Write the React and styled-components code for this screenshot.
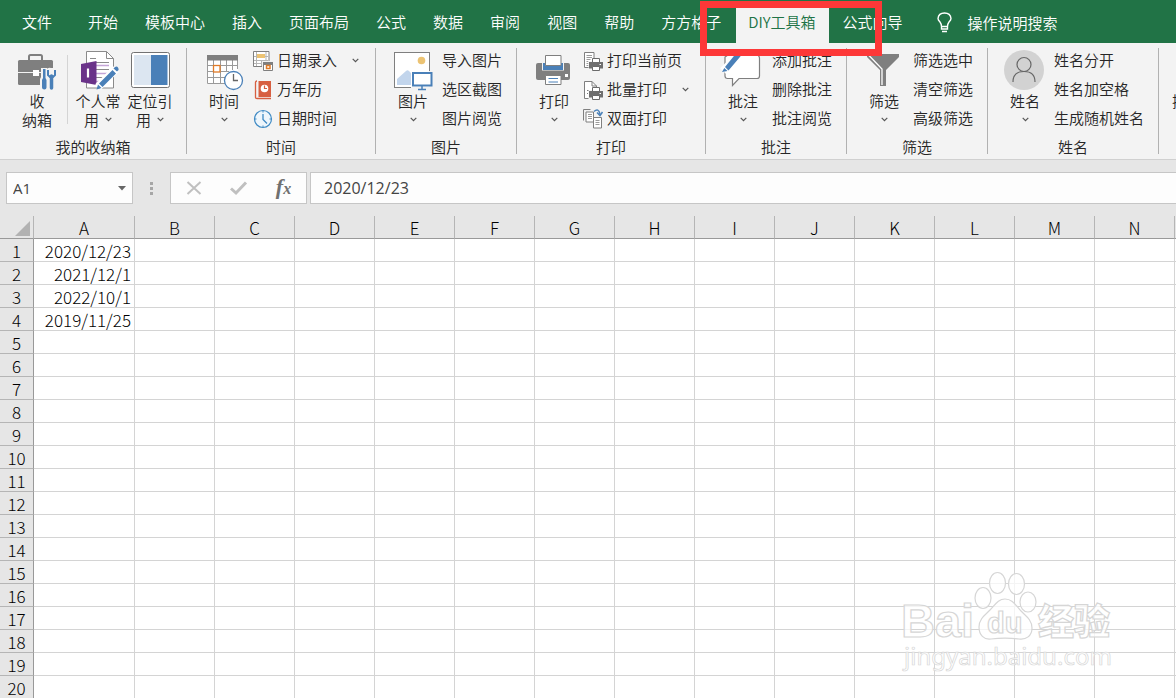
import React, { useState } from "react";
import styled, { createGlobalStyle } from "styled-components";

const colors = {
  green: "#217346",
  ribbon: "#f3f3f3",
  bar: "#e6e6e6",
  gray: "#7f7f7f",
  blue: "#4a80b8",
  text: "#262626",
};

const GlobalStyle = createGlobalStyle`
  * {
    box-sizing: border-box;
  }

  body {
    margin: 0;
    font-family: "Noto Sans CJK SC", "Liberation Sans", sans-serif;
    font-size: 15px;
    font-weight: 350;
    color: ${colors.text};
  }

  button, input {
    font: inherit;
    color: inherit;
    border: none;
    background: none;
    padding: 0;
    margin: 0;
  }

  svg {
    display: block;
    flex-shrink: 0;
    overflow: visible;
  }
`;

const AppContainer = styled.div`
  position: relative;
  height: 100vh;
  display: flex;
  flex-direction: column;
  overflow: hidden;
  background: #fff;
`;

const TabBar = styled.nav`
  flex-shrink: 0;
  display: flex;
  align-items: stretch;
  gap: 2px;
  height: 43px;
  padding: 8px 0 0 10px;
  background: ${colors.green};
`;

const Tab = styled.button`
  flex-shrink: 0;
  padding: 0 13px 8px 12px;
  margin-right: ${(props) => (props.$first ? "9px" : "0")};
  line-height: 22px;
  white-space: nowrap;
  color: ${(props) => (props.$active ? colors.green : "#fff")};
  background: ${(props) => (props.$active ? colors.ribbon : "transparent")};
`;

const TellMe = styled.button`
  display: flex;
  align-items: center;
  gap: 16px;
  padding: 0 12px 6px 19px;
  color: #fff;
  white-space: nowrap;
`;

const RibbonContainer = styled.div`
  flex-shrink: 0;
  display: flex;
  overflow: hidden;
  background: ${colors.ribbon};
  border-bottom: 1px solid #d0d0d0;
`;

const Group = styled.section`
  flex: 0 0 ${(props) => props.$width}px;
  display: flex;
  flex-direction: column;
  padding: 3px 0 2px;
`;

const GroupBody = styled.div`
  display: flex;
  height: 87px;
  padding-left: ${(props) => (props.$tight ? "2px" : "11px")};
`;

const GroupTitle = styled.div`
  min-height: 24px;
  padding-top: 4px;
  line-height: 19px;
  text-align: center;
`;

const Separator = styled.div`
  flex: 0 0 1px;
  margin: 5px 0;
  background: #b1b1b1;
`;

const InnerSeparator = styled.div`
  flex: 0 0 1px;
  margin: 9px 4px;
  background: #d4d4d4;
`;

const BigButton = styled.button`
  flex: 0 0 52px;
  display: flex;
  flex-direction: column;
  align-items: center;
  padding-top: 4px;
  line-height: 19px;
  white-space: nowrap;
`;

const BigLabel = styled.span`
  margin-top: 1px;
`;

const SecondLine = styled.span`
  display: flex;
  align-items: center;
  justify-content: center;
  gap: 6px;
  height: 19px;
`;

const CommandList = styled.div`
  display: flex;
  flex-direction: column;
  align-items: flex-start;
  margin-left: 3px;
`;

const Command = styled.button`
  display: flex;
  align-items: center;
  gap: 4px;
  height: 29px;
  white-space: nowrap;
`;

const CommandLabel = styled.span`
  padding-bottom: 2px;
`;

const CommandArrow = styled.span`
  margin-left: 11px;
`;

const FormulaBar = styled.div`
  flex-shrink: 0;
  display: flex;
  padding: 12px 0 12px 6px;
  background: ${colors.bar};
  color: #444;
  font-family: "Open Sans", "Noto Sans CJK SC", sans-serif;
  font-weight: 400;
`;

const BarBox = styled.div`
  display: flex;
  align-items: center;
  min-width: 0;
  height: 32px;
  border: 1px solid #c6c6c6;
  background: #fdfdfd;
`;

const NameBox = styled(BarBox)`
  flex: 0 0 127px;

  input {
    flex: 1;
    min-width: 0;
    padding-left: 6px;
    outline: none;
  }

  button {
    padding: 8px 6px;
  }
`;

const Dots = styled.div`
  flex: 0 0 37px;
  display: flex;
  flex-direction: column;
  align-items: center;
  justify-content: center;
  gap: 2px;
`;

const Dot = styled.span`
  width: 3px;
  height: 3px;
  background: #a6a6a6;
`;

const FormulaButtons = styled(BarBox)`
  flex: 0 0 137px;
  margin-right: 3px;
`;

const FormulaButton = styled.button`
  flex: 1;
  height: 100%;
  display: flex;
  align-items: center;
  justify-content: center;
`;

const FxLabel = styled.span`
  font-family: "Liberation Serif", serif;
  font-size: 22px;
  line-height: 24px;
  font-style: italic;
  font-weight: bold;
  color: #707070;

  small {
    font-size: 16px;
  }
`;

const FormulaInputBox = styled(BarBox)`
  flex: 1;
  border-right: none;

  input {
    width: 100%;
    padding-left: 13px;
    font-size: 16px;
    outline: none;
  }
`;

const SheetContainer = styled.main`
  position: relative;
  flex: 1;
  min-height: 0;
  overflow: hidden;
`;

const SheetTable = styled.table`
  table-layout: fixed;
  width: 1255px;
  border-spacing: 0;
  font-size: 17px;
  line-height: 21px;
  color: #000;

  th {
    padding: 1px 0 0;
    font-weight: 300;
    background: ${colors.bar};
  }
`;

const IndexCol = styled.col`
  width: 34px;
`;

const FirstCol = styled.col`
  width: 101px;
`;

const Col = styled.col`
  width: 80px;
`;

const ColumnHead = styled.th`
  height: 23px;
  border-bottom: 1px solid #999;
  border-right: 1px solid #b5b5b5;
`;

const Corner = styled(ColumnHead)`
  svg {
    margin: 3px 3px 2px auto;
  }
`;

const RowHead = styled.th`
  height: 23px;
  border-right: 1px solid #999;
  border-bottom: 1px solid #b5b5b5;
`;

const Cell = styled.td`
  height: 23px;
  padding: 1px 3px 0 0;
  text-align: right;
  font-weight: 300;
  border-right: 1px solid #d4d4d4;
  border-bottom: 1px solid #d4d4d4;
`;

const Watermark = styled.div`
  position: absolute;
  right: 60px;
  bottom: 20px;
`;

const Highlight = styled.div`
  position: absolute;
  top: 1px;
  left: 700px;
  width: 182px;
  height: 55px;
  border: 7px solid #fd3838;
  pointer-events: none;
`;

function Chevron() {
  return (
    <svg width="7" height="5" viewBox="0 0 7 5" fill="none" stroke="#555" strokeWidth="1.2">
      <path d="M.7 .8 3.5 3.6 6.3 .8" />
    </svg>
  );
}

function BigIcon({ children }) {
  return (
    <svg width="40" height="40" viewBox="0 0 40 40" fill="none">
      {children}
    </svg>
  );
}

function SmallIcon({ children }) {
  return (
    <svg width="20" height="20" viewBox="0 0 20 20" fill="none">
      {children}
    </svg>
  );
}

function ToolboxIcon() {
  return (
    <BigIcon>
      <path d="M12 10V6.500q0-1.500 1.500-1.500h10q1.500 0 1.500 1.500V10" stroke={colors.gray} strokeWidth="2" />
      <rect x="1" y="10" width="35" height="25" rx="1.500" fill={colors.gray} />
      <path d="M1 22.500h35" stroke="#f3f3f3" />
      <rect x="16" y="20" width="6" height="6" fill="#fff" />
      <path d="M24 18h6v9l1 2v11h-8V29l1-2zM29 20q2-3 5-2h3q4 3 2 9l-2 3v10h-6V30q-3-3-2-6z" fill="#f3f3f3" />
      <path d="M26 19h2.500v9l1 2v7.500q0 2-2.200 2t-2.300-2V30l1-2z" fill={colors.blue} />
      <path d="M31 20v5l2 2h3l2-2v-5" stroke={colors.blue} strokeWidth="2" />
      <path d="M34.500 26v12" stroke={colors.blue} strokeWidth="3.500" strokeLinecap="round" />
    </BigIcon>
  );
}

function NotebookIcon() {
  return (
    <BigIcon>
      <path d="M8.500 1.500h20l7 7v29.500h-27z" fill="#fff" stroke="#8a8a8a" />
      <path d="M28.500 1.500v7h7M12 8.500h6" stroke="#8a8a8a" />
      <path d="M18 12.500h13M18 19.500h13M18 27.500h8" stroke="#8a8a8a" />
      <path d="M18 15.500h13M18 23.500h13M18 31.500h6" stroke="#c4a5d6" strokeWidth="1.500" />
      <path d="M3 14 18.500 11v24L3 32z" fill="#6a3389" />
      <path d="M10 18.500v9" stroke="#fff" strokeWidth="2.200" />
      <path d="M38 19 20 37" stroke="#fff" strokeWidth="8" />
      <path d="M35.500 18.500l1.500-1.500q2-1 3 .5t.5 2.500L39 21.500zM34.500 20 38 23.500 24.500 37 21 33.500zM20 34.500 23.500 38 18.500 39.500z" fill={colors.blue} />
    </BigIcon>
  );
}

function PaneIcon() {
  return (
    <BigIcon>
      <rect x="1.500" y="2.500" width="38" height="35" rx="2" fill="#fff" stroke="#737373" />
      <path d="M4 5h17v30H4z" fill="#dce6f1" />
      <path d="M21 5h16.500v30H21z" fill={colors.blue} />
    </BigIcon>
  );
}

function CalendarIcon() {
  return (
    <BigIcon>
      <path d="M3 5h31v29H3z" fill="#fff" />
      <path d="M3.500 10v23.500H21M9.500 10v23M16.500 10v23M22.500 10v12M28.500 10v10M33.500 10v9M3 15.500h30M3 21.500h22M3 27.500h18" stroke="#9a9a9a" />
      <path d="M3 5h31v5.500H3z" fill={colors.gray} />
      <rect x="9.500" y="15.500" width="6.500" height="6.500" fill="#fff" stroke="#e07b28" strokeWidth="1.300" />
      <circle cx="29.500" cy="30.500" r="9" fill="#fff" stroke={colors.blue} strokeWidth="1.300" />
      <path d="M29.500 24v6.500H34" stroke="#666" strokeWidth="1.300" />
    </BigIcon>
  );
}

function PictureIcon() {
  return (
    <BigIcon>
      <rect x="1.500" y="2.500" width="35" height="35" fill="#fff" stroke={colors.gray} />
      <circle cx="28.500" cy="10.500" r="3.800" fill="#ecc373" />
      <path d="M4 35V29l9-8q1.500-1.500 3 0l5 5v9z" fill="#c2d5ec" />
      <path d="M18 21h22v19H18z" fill="#f3f3f3" />
      <path d="M18 21h18v16H18z" fill="#fff" />
      <path d="M18 37h22v3H18z" fill="#f3f3f3" />
      <rect x="20" y="23" width="18.500" height="12.500" fill="#fff" stroke={colors.blue} strokeWidth="2" />
      <path d="M29 36v3M25 39.500h8" stroke={colors.blue} strokeWidth="1.500" />
    </BigIcon>
  );
}

function PrinterIcon() {
  return (
    <BigIcon>
      <path d="M4 13h30q2 0 2 2v13q0 2-2 2H4q-2 0-2-2V15q0-2 2-2z" fill={colors.gray} />
      <path d="M8 12.500h22v8H8z" fill="#f3f3f3" />
      <path d="M9 13h20v7H9z" fill={colors.blue} />
      <path d="M11.500 5.500h15.500v10H11.500z" fill="#fff" stroke={colors.gray} />
      <path d="M31 24h3v3h-3z" fill="#fff" />
      <path d="M11.500 25.500h15.500v9H11.500z" fill="#fff" stroke={colors.gray} />
      <path d="M14.500 28.500h9.500M14.500 32h9.500" stroke={colors.blue} />
    </BigIcon>
  );
}

function CommentIcon() {
  return (
    <BigIcon>
      <path d="M5 5h28q3.500 0 3.500 3.500V26q0 2.500-2.500 2.500H16l-6.500 7v-7H4.500Q2 28.500 2 26V7z" fill="#fff" stroke={colors.gray} strokeWidth="1.200" />
      <path d="M0 21 19 2" stroke="#fff" strokeWidth="8" />
      <path d="M15 1h7L5.500 20.500 2 17zM1.300 18 4.500 21-1 22z" fill={colors.blue} />
    </BigIcon>
  );
}

function FunnelIcon() {
  return (
    <BigIcon>
      <path d="M3 4h32v3L22 20v16h-6V20L3 7z" fill={colors.gray} />
      <path d="M5 5.500 18 19v16" stroke="#fff" strokeWidth="1.300" />
    </BigIcon>
  );
}

function PersonIcon() {
  return (
    <BigIcon>
      <circle cx="19" cy="20" r="20" fill="#d2d2d2" />
      <g stroke="#666" strokeWidth="1.200">
        <circle cx="19" cy="14.500" r="7" />
        <path d="M8 32q0-10.500 11-10.500T30 32" />
      </g>
    </BigIcon>
  );
}

function DateEntryIcon() {
  return (
    <SmallIcon>
      <path d="M.5 .5h15.500v15H.5z" fill="#fff" stroke={colors.gray} />
      <path d="M3.500 1v14M13 1v8M1 9.500h14M1 12.500h9M8.500 9v6M1 5.500h14" stroke="#b5b5b5" />
      <path d="M4 3h8v4H4z" fill="#ecc373" />
      <path d="M9 10h12v11H9z" fill="#f3f3f3" />
      <path d="M10.500 11.500h9v8h-9z" fill="#fff" stroke={colors.gray} />
      <path d="M10 11h10v3H10z" fill={colors.gray} />
      <path d="M13.500 14.500h3.500v3h-3.500z" stroke="#e07b28" strokeWidth="1.500" />
    </SmallIcon>
  );
}

function AlmanacIcon() {
  return (
    <SmallIcon>
      <path d="M4 1Q2.500 1 2.500 2.500v15q0 1 1.500 1h14" stroke="#d75f41" strokeWidth="1.300" />
      <path d="M5.500 1H18v16H5.500z" fill="#d75f41" />
      <circle cx="11.500" cy="8.500" r="3.800" fill="#fff" />
      <path d="M11.500 5.500v3h2.500" stroke="#d75f41" strokeWidth="1.200" />
    </SmallIcon>
  );
}

function ClockIcon() {
  return (
    <SmallIcon>
      <circle cx="10" cy="10" r="8.500" fill="#eef6fc" stroke="#3f8ac4" strokeWidth="1.200" />
      <path d="M10 5v5.500l4 4" stroke="#3f8ac4" strokeWidth="1.300" />
      <path d="M10 2v1.500M10 16.500V18M2 10h1.500M16.500 10H18" stroke="#3f8ac4" />
    </SmallIcon>
  );
}

function MiniPrinter() {
  return (
    <g>
      <path d="M5.500 10h15v10h-15z" fill="#f3f3f3" />
      <path d="M9.500 7.500h7v4h-7z" fill="#fff" stroke="#6a6a6a" />
      <path d="M6 11h14v6.500H6z" fill="#6f6f6f" />
      <path d="M16.500 13h1.500v1h-1.500z" fill="#fff" />
      <path d="M9.500 15.500h7v4h-7z" fill="#fff" stroke="#6a6a6a" />
    </g>
  );
}

function PrintPageIcon() {
  return (
    <SmallIcon>
      <path d="M1.500 1.500h9.500v15H1.500z" fill="#fff" stroke={colors.gray} />
      <path d="M3.500 4.500h5.500M3.500 6.500h5.500M3.500 8.500h4M3.500 10.500h2M3.500 12.500h2M3.500 14.500h2" stroke="#9a9a9a" />
      <MiniPrinter />
    </SmallIcon>
  );
}

function BatchPrintIcon() {
  return (
    <SmallIcon>
      <path d="M1.500 1.500h7.500l4.500 4.500v12.500h-12z" fill="#fff" stroke={colors.gray} />
      <path d="M9 1.500v4.500h4.500M4 10.500h2M4 13.500h1" stroke={colors.gray} />
      <MiniPrinter />
    </SmallIcon>
  );
}

function DuplexIcon() {
  return (
    <SmallIcon>
      <path d="M.5 11.500V.5h7" stroke={colors.gray} />
      <path d="M3 3h7.500v10H3z" fill="#fff" stroke={colors.gray} />
      <path d="M5 5.500h4M5 7.500h4M5 9.500h4" stroke="#9a9a9a" />
      <path d="M10.500 8.500h8v10.500h-8z" fill="#fff" stroke={colors.gray} />
      <path d="M12.500 11.500h4M12.500 13.500h4M12.500 15.500h4" stroke="#9a9a9a" />
      <path d="M11 2.500q4.500-4 6 2.500" stroke={colors.blue} strokeWidth="1.500" />
      <path d="M14 3.500 17 6.500 19.500 3" stroke={colors.blue} strokeWidth="1.500" />
    </SmallIcon>
  );
}

const tabs = ["文件", "开始", "模板中心", "插入", "页面布局", "公式", "数据", "审阅", "视图", "帮助", "方方格子", "DIY工具箱", "公式向导"];

const groups = [
  {
    title: "时间",
    width: 188,
    icon: CalendarIcon,
    commands: [
      { label: "日期录入", icon: DateEntryIcon, menu: true },
      { label: "万年历", icon: AlmanacIcon },
      { label: "日期时间", icon: ClockIcon },
    ],
  },
  {
    title: "图片",
    width: 140,
    icon: PictureIcon,
    commands: [{ label: "导入图片" }, { label: "选区截图" }, { label: "图片阅览" }],
  },
  {
    title: "打印",
    width: 188,
    icon: PrinterIcon,
    commands: [
      { label: "打印当前页", icon: PrintPageIcon },
      { label: "批量打印", icon: BatchPrintIcon, menu: true },
      { label: "双面打印", icon: DuplexIcon },
    ],
  },
  {
    title: "批注",
    width: 140,
    icon: CommentIcon,
    commands: [{ label: "添加批注" }, { label: "删除批注" }, { label: "批注阅览" }],
  },
  {
    title: "筛选",
    width: 140,
    icon: FunnelIcon,
    commands: [{ label: "筛选选中" }, { label: "清空筛选" }, { label: "高级筛选" }],
  },
  {
    title: "姓名",
    width: 170,
    icon: PersonIcon,
    commands: [{ label: "姓名分开" }, { label: "姓名加空格" }, { label: "生成随机姓名" }],
  },
];

const columns = "ABCDEFGHIJKLMNO".split("");
const dates = ["2020/12/23", "2021/12/1", "2022/10/1", "2019/11/25"];
const rows = Array.from({ length: 20 }, (_, i) => i + 1);

function StorageGroup() {
  return (
    <Group $width={186}>
      <GroupBody>
        <BigButton>
          <ToolboxIcon />
          <BigLabel>收</BigLabel>
          <SecondLine>纳箱</SecondLine>
        </BigButton>
        <InnerSeparator />
        <BigButton>
          <NotebookIcon />
          <BigLabel>个人常</BigLabel>
          <SecondLine>用 <Chevron /></SecondLine>
        </BigButton>
        <BigButton>
          <PaneIcon />
          <BigLabel>定位引</BigLabel>
          <SecondLine>用 <Chevron /></SecondLine>
        </BigButton>
      </GroupBody>
      <GroupTitle>我的收纳箱</GroupTitle>
    </Group>
  );
}

function RibbonGroup({ title, width, icon: Icon, commands }) {
  return (
    <Group $width={width}>
      <GroupBody>
        <BigButton>
          <Icon />
          <BigLabel>{title}</BigLabel>
          <SecondLine><Chevron /></SecondLine>
        </BigButton>
        <CommandList>
          {commands.map(({ label, icon: CommandIcon, menu }) => (
            <Command key={label}>
              {CommandIcon && <CommandIcon />}
              <CommandLabel>{label}</CommandLabel>
              {menu && <CommandArrow><Chevron /></CommandArrow>}
            </Command>
          ))}
        </CommandList>
      </GroupBody>
      <GroupTitle>{title}</GroupTitle>
    </Group>
  );
}

function Ribbon() {
  return (
    <RibbonContainer>
      <StorageGroup />
      <Separator />
      {groups.map((group) => (
        <React.Fragment key={group.title}>
          <RibbonGroup {...group} />
          <Separator />
        </React.Fragment>
      ))}
      <Group $width={140}>
        <GroupBody $tight>
          <BigButton>
            <BigIcon />
            <BigLabel>插入</BigLabel>
          </BigButton>
        </GroupBody>
      </Group>
    </RibbonContainer>
  );
}

function BaiduWatermark() {
  return (
    <Watermark>
      <svg width="220" height="110" viewBox="0 0 220 110" fill="#fff" fillOpacity="0.75" stroke="#d6d6d6">
        <g fontFamily="'Liberation Sans', sans-serif" fontWeight="bold" strokeWidth="1.200">
          <text x="5" y="69" fontSize="47">Bai</text>
          <ellipse cx="87" cy="30" rx="8" ry="10.500" />
          <ellipse cx="101.500" cy="15" rx="8" ry="10.500" />
          <ellipse cx="120.500" cy="16" rx="8" ry="10.500" />
          <ellipse cx="132" cy="34" rx="8" ry="10" />
          <path d="M109 31c8 0 11 7 16 12s11 9 11 17-6 12-13 11c-9-1-19-1-28 0-7 1-12-4-12-12s6-12 11-17 8-11 15-11z" />
          <text x="91" y="65" fontSize="29">du</text>
        </g>
        <text
          x="142"
          y="67"
          fontSize="36"
          fontWeight="900"
          fontFamily="'Noto Sans CJK SC', sans-serif"
          strokeWidth="1.200"
        >
          经验
        </text>
        <text x="8" y="97" fontSize="24" fontWeight="400" fontFamily="'Noto Sans', sans-serif" strokeWidth="0.700">
          jingyan.baidu.com
        </text>
      </svg>
    </Watermark>
  );
}

function Sheet() {
  return (
    <SheetContainer>
      <SheetTable>
        <colgroup>
          <IndexCol />
          <FirstCol />
          {columns.slice(1).map((name) => (
            <Col key={name} />
          ))}
        </colgroup>
        <thead>
          <tr>
            <Corner aria-label="全选">
              <svg width="15" height="15" viewBox="0 0 15 15">
                <path d="M15 0v15H0z" fill="#b2b2b2" />
              </svg>
            </Corner>
            {columns.map((name) => (
              <ColumnHead key={name} scope="col">{name}</ColumnHead>
            ))}
          </tr>
        </thead>
        <tbody>
          {rows.map((row) => (
            <tr key={row}>
              <RowHead scope="row">{row}</RowHead>
              {columns.map((name) => (
                <Cell key={name}>{name === "A" ? dates[row - 1] : null}</Cell>
              ))}
            </tr>
          ))}
        </tbody>
      </SheetTable>
      <BaiduWatermark />
    </SheetContainer>
  );
}

export default function App() {
  const [active, setActive] = useState("DIY工具箱");
  const [cell, setCell] = useState("A1");
  const [formula, setFormula] = useState(dates[0]);

  return (
    <AppContainer>
      <GlobalStyle />
      <TabBar>
        {tabs.map((tab, i) => (
          <Tab key={tab} $first={i === 0} $active={tab === active} onClick={() => setActive(tab)}>
            {tab}
          </Tab>
        ))}
        <TellMe>
          <svg width="15" height="21" viewBox="0 0 15 21" fill="none" stroke="#fff" strokeWidth="1.400">
            <path d="M4.500 14.500q0-2.500-1.500-4.500Q1 8 1 6.500 1.500 1 7.500 1T14 6.500q0 1.500-2 3.500-1.500 2-1.500 4.500v2.500h-6zM4.500 14.500h6M5 19.500h5" />
          </svg>
          操作说明搜索
        </TellMe>
      </TabBar>
      <Ribbon />
      <FormulaBar>
        <NameBox>
          <input aria-label="名称框" value={cell} onChange={(e) => setCell(e.target.value)} />
          <button aria-label="名称列表">
            <svg width="8" height="5" viewBox="0 0 8 5">
              <path d="M0 0h8L4 4.500z" fill="#666" />
            </svg>
          </button>
        </NameBox>
        <Dots>
          <Dot />
          <Dot />
          <Dot />
        </Dots>
        <FormulaButtons>
          <FormulaButton aria-label="取消">
            <svg width="16" height="14" viewBox="0 0 16 14" fill="none" stroke="#c0c0c0" strokeWidth="2">
              <path d="M1.500 1 14.500 13M14.500 1 1.500 13" />
            </svg>
          </FormulaButton>
          <FormulaButton aria-label="输入">
            <svg width="17" height="14" viewBox="0 0 17 14" fill="none" stroke="#c0c0c0" strokeWidth="3">
              <path d="M1 7.500 6 12 16 1.500" />
            </svg>
          </FormulaButton>
          <FormulaButton aria-label="插入函数">
            <FxLabel>f<small>x</small></FxLabel>
          </FormulaButton>
        </FormulaButtons>
        <FormulaInputBox>
          <input aria-label="编辑栏" value={formula} onChange={(e) => setFormula(e.target.value)} />
        </FormulaInputBox>
      </FormulaBar>
      <Sheet />
      <Highlight />
    </AppContainer>
  );
}
